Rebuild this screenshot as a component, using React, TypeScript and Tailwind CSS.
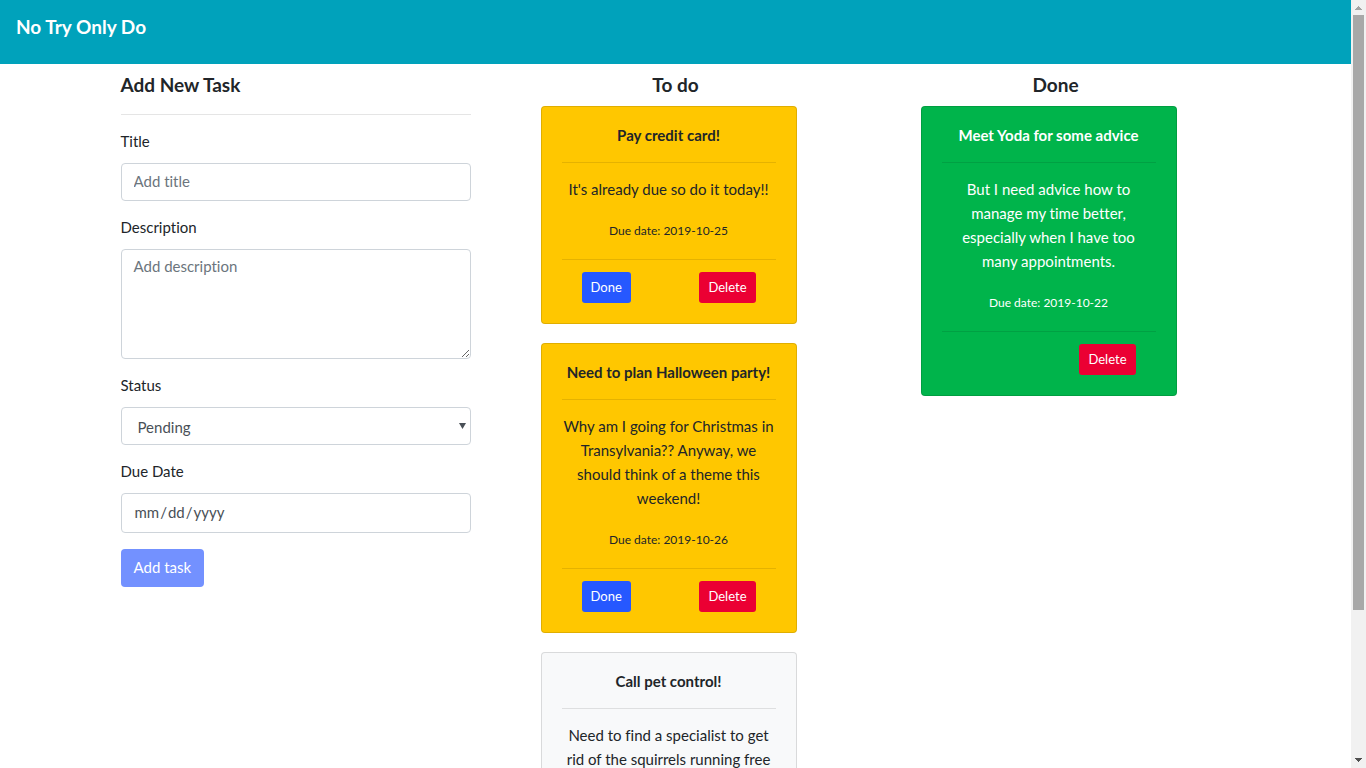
import React from 'react';

type Tone = 'warning' | 'light' | 'success';

interface Task {
  title: string;
  description: string;
  due: string;
  tone: Tone;
}

const todo: Task[] = [
  { title: 'Pay credit card!', description: "It's already due so do it today!!", due: '2019-10-25', tone: 'warning' },
  {
    title: 'Need to plan Halloween party!',
    description: 'Why am I going for Christmas in Transylvania?? Anyway, we should think of a theme this weekend!',
    due: '2019-10-26',
    tone: 'warning',
  },
  {
    title: 'Call pet control!',
    description: 'Need to find a specialist to get rid of the squirrels running free',
    due: '2019-10-28',
    tone: 'light',
  },
];

const done: Task[] = [
  {
    title: 'Meet Yoda for some advice',
    description: 'But I need advice how to manage my time better, especially when I have too many\u00a0appointments.',
    due: '2019-10-22',
    tone: 'success',
  },
];

const tones: Record<Tone, string> = {
  warning: 'bg-[#ffc700] text-[#212529]',
  light: 'bg-[#f8f9fa] text-[#212529]',
  success: 'bg-[#00b44b] text-white',
};

const field = 'block w-full rounded border border-[#ced4da] bg-white px-3 text-[15px] leading-6 text-[#495057] placeholder:text-[#6c757d]';
const label = 'mb-3 block leading-5';
const smallButton = 'h-[31px] rounded-[3px] px-[9px] pb-0.5 text-[13px] text-white';

function TaskCard({ task, canFinish }: { task: Task; canFinish: boolean }) {
  return (
    <li className={`w-64 rounded border border-black/12 bg-clip-border p-5 text-center ${tones[task.tone]}`}>
      <h3 className="leading-[17px] font-bold">{task.title}</h3>
      <hr className="mt-[18px] mb-3.5 border-black/10" />
      <p>{task.description}</p>
      <p className="mt-[18px] text-xs leading-6">Due date: {task.due}</p>
      <hr className="mt-4 mb-3 border-black/10" />
      <div className="flex justify-between px-5">
        {canFinish && (
          <button type="button" className={`${smallButton} bg-[#2658ff]`}>
            Done
          </button>
        )}
        <button type="button" className={`${smallButton} ml-auto bg-[#eb0033]`}>
          Delete
        </button>
      </div>
    </li>
  );
}

function Column({ heading, tasks, canFinish }: { heading: string; tasks: Task[]; canFinish: boolean }) {
  return (
    <section className="px-[15px]">
      <h2 className="mb-2.5 text-center text-[19px] leading-[22px] font-bold">{heading}</h2>
      <ul className="flex flex-col gap-[19px] pl-10">
        {tasks.map((task) => (
          <TaskCard key={task.title} task={task} canFinish={canFinish} />
        ))}
      </ul>
    </section>
  );
}

function TaskForm() {
  return (
    <section className="px-[15px]">
      <h2 className="text-[19px] leading-[22px] font-bold">Add New Task</h2>
      <hr className="mt-[18px] mb-4 border-black/10" />
      <form className="flex flex-col items-start gap-4" onSubmit={(e) => e.preventDefault()}>
        <div className="w-full">
          <label htmlFor="title" className={label}>Title</label>
          <input id="title" type="text" placeholder="Add title" className={`${field} h-[38px] pb-0.5`} />
        </div>
        <div className="w-full">
          <label htmlFor="description" className={label}>Description</label>
          <textarea id="description" placeholder="Add description" className={`${field} h-[110px] resize-y py-1`} />
        </div>
        <div className="w-full">
          <label htmlFor="status" className={label}>Status</label>
          <div className="relative">
            <select id="status" defaultValue="Pending" className={`${field} h-[38px] appearance-none pt-0.5 pl-4`}>
              <option>Pending</option>
              <option>Urgent</option>
              <option>Done</option>
            </select>
            <svg className="pointer-events-none absolute top-4 right-[5px] h-[6px] w-[7px]" viewBox="0 0 7 6" aria-hidden="true">
              <path d="M0 0H7L3.5 6Z" fill="#495057" />
            </svg>
          </div>
        </div>
        <div className="w-full">
          <label htmlFor="due" className={label}>Due Date</label>
          <input id="due" type="date" className={`${field} h-10 pb-0.5 [&::-webkit-calendar-picker-indicator]:hidden`} />
        </div>
        <button type="submit" disabled className="h-[38px] rounded bg-[#7391ff] px-[13px] pb-0.5 text-white">
          Add task
        </button>
      </form>
    </section>
  );
}

function ScrollTrack() {
  return (
    <div className="flex w-[15px] shrink-0 flex-col items-center bg-[#f1f1f1]" aria-hidden="true">
      <svg className="h-[15px] w-[15px] shrink-0" viewBox="0 0 15 15" shapeRendering="crispEdges">
        <path d="M7 6H8V7H9V8H10V9H11V10H4V9H5V8H6V7H7Z" fill="#a3a3a3" />
      </svg>
      <div className="flex w-[11px] flex-1 flex-col">
        <div className="h-[80.6%] bg-[#a8a8a8]" />
      </div>
      <svg className="h-[15px] w-[15px] shrink-0" viewBox="0 0 15 15" shapeRendering="crispEdges">
        <path d="M4 5H11V6H10V7H9V8H8V9H7V8H6V7H5V6H4Z" fill="#505050" />
      </svg>
    </div>
  );
}

export default function App() {
  return (
    <div className="flex h-screen bg-white font-['Lato','Noto_Sans',sans-serif] text-[15px] leading-6 text-[#212529] [font-variant-ligatures:none]">
      <div className="min-w-0 flex-1 overflow-y-auto [scrollbar-width:none]">
        <header className="h-16 bg-[#00a2bb] px-4 pt-3">
          <h1 className="text-[19px] leading-[30px] font-bold text-white">No Try Only Do</h1>
        </header>
        <main className="mx-auto mt-2.5 grid max-w-[1140px] grid-cols-1 gap-y-6 pb-5 md:grid-cols-3">
          <TaskForm />
          <Column heading="To do" tasks={todo} canFinish />
          <Column heading="Done" tasks={done} canFinish={false} />
        </main>
      </div>
      <ScrollTrack />
    </div>
  );
}
